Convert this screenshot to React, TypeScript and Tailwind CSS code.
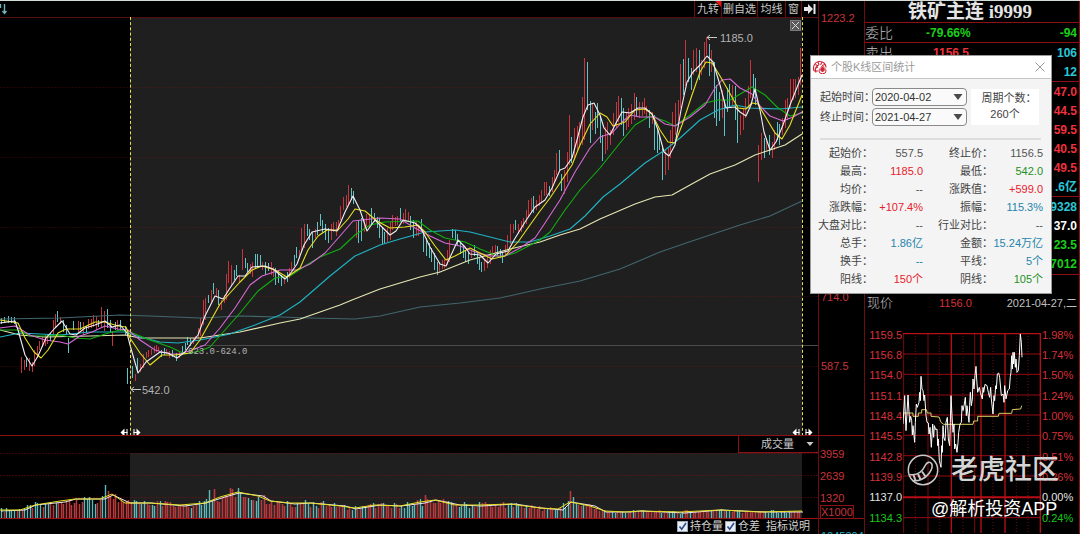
import {ReactElement, useState} from 'react';

type Point = [number, number];
type Candle = [number, number, number];

// [x, high, low]
const RISES:Candle[] = [
  [21,357,373],[24,360,370],[29,358,371],[32,362,372],[34,350,366],[37,346,358],[39,341,350],[42,337,347],[45,335,346],[47,334,344],
  [53,320,335],[55,314,328],[60,317,324],[78,321,332],[83,322,335],[88,319,329],[91,319,328],[93,315,327],[96,316,330],[101,307,327],[104,311,331],
  [112,331,346],[117,320,331],[135,374,381],[140,364,372],[143,354,368],[146,352,358],[148,350,357],[151,349,355],[154,346,353],
  [156,345,352],[158,347,351],[166,349,354],[169,351,358],[179,352,358],[193,338,344],[195,336,341],[198,328,338],[200,318,336],[203,300,325],
  [205,298,320],[211,290,302],[216,288,297],[221,300,310],[224,295,303],[226,274,300],[228,261,283],[231,265,285],[239,275,283],
  [242,249,270],[250,264,274],[252,262,277],[262,262,270],[271,262,275],[273,267,277],[284,276,284],[289,268,278],[291,262,270],
  [299,250,259],[301,228,252],[304,224,248],[315,229,238],[331,224,240],[333,222,232],[336,222,236],[338,220,230],[340,206,220],
  [343,197,210],[346,195,207],[348,185,205],[356,222,238],[364,219,232],[366,214,226],[369,215,228],[387,228,242],[390,222,240],
  [392,215,230],[395,217,226],[397,216,225],[403,213,224],[405,209,222],[408,212,221],[416,222,236],[418,225,236],[439,262,273],
  [442,260,269],[444,258,268],[447,250,265],[449,240,262],[471,250,258],[484,260,271],[487,257,268],[490,250,264],[492,246,256],
  [495,245,253],[505,245,256],[507,235,250],[510,224,244],[513,224,233],[518,224,234],[521,221,232],[523,218,228],[526,210,224],
  [528,200,217],[531,198,212],[536,200,210],[539,195,206],[541,190,202],[544,182,196],[546,182,195],[552,177,192],[554,170,183],
  [556,153,175],[564,170,194],[567,152,182],[569,115,165],[574,128,160],[577,126,150],[579,122,148],[582,97,145],[584,58,140],
  [592,103,130],[605,127,154],[607,122,150],[610,130,145],[613,113,135],[616,102,128],[618,96,122],[626,112,130],[628,108,127],
  [631,104,124],[634,93,120],[639,102,118],[642,102,116],[644,98,114],[646,106,117],[652,112,124],[665,150,175],[668,148,170],
  [670,130,158],[672,112,145],[675,103,135],[678,100,125],[680,64,108],[685,40,86],[693,50,75],[696,48,72],[701,60,75],
  [704,42,68],[706,37,55],[711,50,72],[722,90,118],[732,85,105],[740,115,135],[743,108,130],[745,98,118],[748,86,108],
  [750,60,98],[758,145,182],[761,133,160],[766,140,150],[772,142,158],[774,130,150],[782,118,135],[785,100,128],[787,98,120],
  [790,79,108],[793,79,100],[795,79,98],[798,77,95],[800,48,85],
];

const FALLS:Candle[] = [
  [1,318,324],[4,317,323],[8,316,323],[11,317,323],[14,317,324],[26,357,367],[50,333,341],[57,311,322],[63,320,332],[66,325,335],[68,338,353],[73,321,330],[80,322,330],
  [86,326,333],[98,320,327],[107,309,328],[110,320,332],[115,322,330],[120,320,331],[125,326,335],[127,368,384],[132,366,378],[137,358,371],[161,350,357],[164,348,355],
  [172,350,357],[176,353,361],[182,346,355],[185,343,350],[187,337,345],[190,338,346],[208,295,303],[213,283,294],[218,290,305],[234,270,280],[236,265,276],
  [245,258,268],[247,263,272],[255,254,268],[257,254,266],[260,255,267],[265,262,275],[268,263,271],[275,268,285],[278,270,283],
  [281,275,286],[287,272,282],[294,255,266],[296,247,258],[307,224,236],[309,229,240],[312,232,248],[317,222,235],[320,214,226],
  [322,220,233],[325,224,240],[328,228,243],[351,188,200],[353,191,204],[358,220,243],[361,218,241],[371,208,225],[374,213,222],
  [377,217,228],[379,218,238],[382,228,244],[384,232,243],[400,208,222],[410,216,230],[413,220,238],[421,219,232],[423,230,252],
  [426,238,256],[429,243,258],[431,248,262],[434,253,270],[437,262,275],[452,229,238],[455,230,240],[457,234,246],[460,241,254],
  [463,245,258],[465,250,262],[468,252,264],[474,245,256],[477,252,264],[479,258,270],[481,262,272],[497,246,256],[500,249,258],
  [502,252,263],[515,220,230],[533,196,213],[549,186,196],[559,150,170],[561,174,191],[571,137,163],[587,62,110],[590,101,143],
  [595,112,134],[597,103,128],[600,116,143],[602,135,161],[621,98,125],[623,108,136],[636,97,117],[649,110,128],[654,115,150],
  [657,128,153],[659,135,150],[662,148,180],[683,59,95],[688,58,82],[691,68,90],[699,50,80],[709,44,76],[714,62,118],
  [716,85,126],[719,92,121],[724,100,136],[727,88,112],[729,84,108],[735,86,120],[737,108,143],[753,74,96],[755,78,105],
  [764,138,158],[769,135,155],[777,122,140],[779,124,145],
];

const AVERAGES:{color:string, points:string}[] = [
  {color:'#41666d', points:'0,319 60,318 120,315 150,316 200,318 240,316 280,317 310,318 355,319 380,316 420,307 460,303 500,298 540,289 580,281 620,269 660,252 695,240 740,225 770,216 802,201'},
  {color:'#e6e6b4', points:'0,330 20,335 45,337 90,336 125,335 140,338 200,338 240,332 280,323 300,319 320,312 340,305 352,300 380,289 420,277 440,272 470,260 510,249 540,242 560,235 580,229 600,219 635,204 655,197 672,195 690,185 710,174 735,165 755,155 785,145 802,134'},
  {color:'#1fb4c4', points:'0,337 20,333 60,335 90,332 125,332 140,337 160,342 178,343 200,340 230,334 255,325 280,315 300,302 330,276 355,256 380,245 400,239 425,232 455,230 470,232 490,237 510,242 530,242 550,236 570,229 585,216 603,197 620,184 645,163 665,150 680,138 700,120 718,110 735,105 750,108 780,109 802,107'},
  {color:'#10b010', points:'0,330 18,330 30,336 45,336 60,335 75,338 90,339 105,334 120,330 130,332 150,340 170,347 185,354 200,351 210,347 225,330 240,313 258,291 275,278 290,276 305,266 320,257 340,249 355,235 370,225 385,222 418,221 430,230 445,238 465,242 480,249 500,257 515,253 540,240 550,232 565,210 580,190 600,168 620,143 635,125 650,116 665,121 675,126 690,115 705,103 718,100 730,100 742,93 752,87 765,95 777,107 790,116 802,113'},
  {color:'#d66ad6', points:'0,328 15,326 30,335 45,340 60,342 68,344 80,336 92,332 105,326 118,329 128,330 140,340 155,350 170,354 180,354 192,350 205,345 220,328 235,308 250,285 262,276 280,270 297,270 310,264 325,253 340,236 353,221 380,218 400,219 415,228 430,236 445,243 460,246 475,252 490,256 505,256 520,248 535,238 545,223 560,200 575,172 590,148 600,137 612,133 622,122 630,115 640,117 655,117 665,124 675,126 690,117 705,105 715,88 722,80 730,79 740,88 752,94 760,106 770,116 783,121 793,117 802,112'},
  {color:'#e8e020', points:'0,320 18,323 25,338 34,352 41,358 48,350 58,333 66,329 80,329 95,322 105,322 118,326 126,327 130,338 140,353 150,365 162,355 175,355 190,353 200,340 210,322 220,304 230,293 240,282 252,270 262,266 275,270 287,277 300,268 308,250 318,236 327,230 338,230 348,219 355,209 365,211 377,221 390,228 405,227 418,225 425,232 435,246 446,260 455,256 470,248 480,253 492,259 505,256 518,242 530,225 540,211 550,198 560,183 572,165 580,145 590,124 600,113 607,117 613,126 625,122 635,110 645,109 652,114 660,130 668,142 675,143 682,125 692,95 700,72 706,62 712,63 720,76 728,90 738,108 746,109 752,103 758,104 765,116 775,133 782,139 790,125 798,105 802,95'},
  {color:'#f4eef4', points:'0,323 15,321 18,330 25,355 32,366 38,356 46,338 55,328 62,321 70,334 76,335 85,328 95,325 105,321 112,327 120,325 127,333 130,345 138,373 146,362 160,352 168,353 177,358 185,352 190,345 198,335 205,316 215,296 223,299 230,288 238,276 245,276 252,267 265,266 273,269 285,279 290,274 297,264 304,245 312,232 325,229 337,231 345,212 353,196 360,210 367,231 375,220 382,227 390,235 396,231 403,220 415,223 422,230 430,247 440,264 446,266 452,253 458,240 465,247 470,254 480,255 488,263 496,254 508,251 514,240 525,222 535,207 545,200 552,188 560,170 565,168 572,158 577,140 583,117 588,105 594,103 600,115 604,128 610,135 616,123 622,112 630,113 638,108 645,108 652,114 658,130 664,152 669,156 675,145 681,110 687,82 693,72 700,65 707,56 713,62 720,85 726,108 735,107 740,112 746,116 751,105 755,89 760,110 764,132 770,150 776,142 783,125 790,105 798,85 802,75'},
];

const VOLUME_LEVEL:Point[] = [
  [0,510],[20,510],[35,505],[60,501],[75,499],[100,499],[112,494],[125,503],[150,503],[180,505],[205,503],[220,497],[238,492],[258,496],
  [270,501],[290,503],[310,503],[340,506],[355,508],[375,505],[400,506],[420,502],[435,500],[455,505],[480,505],[510,504],[540,508],
  [558,509],[570,502],[590,506],[605,511],[625,512],[640,511],[680,512],[720,510],[760,512],[802,511],
];

const VOLUME_PEAKS:Record<number, number> = {40:485, 80:490, 82:489, 88:488, 161:499, 163:495, 219:491, 220:497};

const levelAt = function(x:number):number{
  const next = VOLUME_LEVEL.findIndex(function(point){return point[0] >= x;});
  if(next <= 0){return VOLUME_LEVEL[0][1];}
  const [x0,y0] = VOLUME_LEVEL[next-1];
  const [x1,y1] = VOLUME_LEVEL[next];
  return y0 + (y1-y0)*(x-x0)/(x1-x0);
};

const volumeBars = Array.from({length:308},function(_,index){
  const x = Math.round(index*2.6)+1;
  const noise = Math.abs(Math.sin(index*12.9898)*43758.5453)%1;
  const level = levelAt(Math.min(x,802));
  const top = VOLUME_PEAKS[index] || Math.round(level+(noise-0.45)*(518-level)*0.5);
  const rising = x < 35 ? noise > 0.6 : Math.sin(index*0.31)+Math.sin(index*1.7)+noise*1.4 > 0.4;
  return {x,top,rising};
});

const toPath = function(candles:Candle[]):string{
  return candles.map(function([x,high,low]){return `M${x+0.5} ${high}V${low}`;}).join('');
};

const barPath = function(rising:boolean):string{
  return volumeBars.filter(function(bar){return bar.rising === rising;}).map(function(bar){return `M${bar.x+0.5} ${bar.top}V518`;}).join('');
};

function RangeHandle(props:{x:number}) : ReactElement {
  const {x} = props;
  return <g fill="#fff" stroke="#fff">
    <path stroke="none" d={`M${x-10} 432.5l4-4v8zM${x+10} 432.5l-4-4v8z`}/>
    <path d={`M${x-7} 432.5h4M${x-3.5} 429v7M${x+7} 432.5h-4M${x+3.5} 429v7`}/>
  </g>;
}

function PriceChart() : ReactElement {
  return <svg className="block w-full h-[418px]" viewBox="0 17 818 418" preserveAspectRatio="none">
    <rect x="130" y="17" width="672" height="418" fill="#1f1f1f"/>
    <path d="M0 17.5H818" stroke="#5a0d0d"/>
    <path d="M0 87.5H818M0 157.5H818M0 227.5H818M0 296.5H818M0 366.5H818" stroke="#8c1414" strokeOpacity="0.25" strokeDasharray="2 1"/>
    <path d="M200 345.5H818" stroke="#4c4c4c"/>
    <path d={toPath(RISES)} stroke="#c9343c"/>
    <path d={toPath(FALLS)} stroke="#5fc4c6"/>
    <g fill="none" strokeWidth="1.1">
      {AVERAGES.map(function(line){
        return <polyline key={line.color} points={line.points} stroke={line.color} strokeLinejoin="round"/>;
      })}
    </g>
    <path d="M130.5 17V435M802.5 17V435" stroke="#e6e04a" strokeDasharray="3 2.2"/>
    <path d="M131 389.5H141M134 387l-3 2.5l3 2.5M707 37.5H717M710 35l-3 2.5l3 2.5" stroke="#c8c8c8" fill="none"/>
    <g fill="#b4b4b4" className="font-['Liberation_Sans',sans-serif] text-[11px]">
      <text x="142" y="394">542.0</text>
      <text x="720" y="42">1185.0</text>
    </g>
    <text x="188" y="354" fill="#b4b4b4" className="font-['Liberation_Mono',monospace] text-[9px]">623.0-624.0</text>
    <RangeHandle x={130.5}/>
    <RangeHandle x={802.5}/>
  </svg>;
}

function VolumeChart() : ReactElement {
  const level = VOLUME_LEVEL.map(function(point){return point.join(',');}).join(' ');
  const slow = VOLUME_LEVEL.map(function([x,y],index){return `${x+(index%2 ? 5 : 1)},${y+(index%3 === 0 ? 1 : 0)}`;}).join(' ');
  return <svg className="block w-full h-[66px]" viewBox="0 453 818 66" preserveAspectRatio="none">
    <rect x="130" y="453" width="672" height="65" fill="#1f1f1f"/>
    <path d="M0 453.5H818M0 475.5H818M0 497.5H818" stroke="#8c1414" strokeOpacity="0.4" strokeDasharray="2 1"/>
    <path d={barPath(true)} stroke="#b8383c" strokeWidth="1.6"/>
    <path d={barPath(false)} stroke="#5fb8ba" strokeWidth="1.4"/>
    <polyline points={slow} fill="none" stroke="#f0e8f0"/>
    <polyline points={level} fill="none" stroke="#e8e020"/>
    <path d="M0 518.5H818" stroke="#a01018"/>
  </svg>;
}

function IndicatorCheck(props:{label:string}) : ReactElement {
  const {label} = props;
  const [checked,setChecked] = useState(true);
  return <label className="flex items-center gap-x-0.5">
    <span className="grid w-[11px] h-[11px]">
      <input type="checkbox" checked={checked} onChange={function(){setChecked(!checked);}} className="col-start-1 row-start-1 appearance-none w-[11px] h-[11px] bg-[#e8eef4] border border-[#9aa8b8]"/>
      {checked && <svg className="col-start-1 row-start-1 pointer-events-none" viewBox="0 0 11 11"><path d="M2.5 5.5L4.7 8.2L9 2" fill="none" stroke="#2c4a8a" strokeWidth="1.6"/></svg>}
    </span>
    {label}
  </label>;
}

function ChartPanel() : ReactElement {
  return <section className="flex-1 min-w-0 relative">
    <header className="h-4 flex items-center justify-between text-[#c8c8c8]">
      <svg className="w-2 h-3" viewBox="0 0 8 12" fill="none" stroke="#6fb4bc"><path d="M0.5 1V5M4.5 1V10M2.5 8L4.5 10.5L6.5 8" strokeWidth="1.4"/></svg>
      <nav className="h-full flex border-l border-[#6e0c10] divide-x divide-[#6e0c10] leading-4">
        <button className="relative w-[27px]">九转<i className="absolute right-0 top-0 border-t-[6px] border-t-[#e01818] border-l-[6px] border-l-transparent"/></button>
        <button className="w-9">删自选</button>
        <button className="w-7">均线</button>
        <button className="w-4">窗</button>
        <button aria-label="收起" className="w-4 flex items-center justify-center">
          <svg className="w-3 h-3" viewBox="0 0 12 12" fill="#e8e8e8"><path d="M0 4H4V1L9 6L4 11V8H0zM9.5 1H11.5V11H9.5z"/></svg>
        </button>
      </nav>
    </header>
    <PriceChart/>
    <button aria-label="关闭区间" className="absolute right-[17px] top-[19px] w-[11px] h-[11px] bg-[#5a5a5a] border border-[#7a7a7a]">
      <svg viewBox="0 0 9 9" stroke="#e0e0e0" fill="none"><path d="M1 1L8 8M8 1L1 8"/></svg>
    </button>
    <div className="h-[18px] flex justify-end border-t border-[#8c1016]">
      <button className="w-20 h-[17px] pl-5 pr-1 flex items-center justify-between border-l border-b border-[#8c1016] text-[#c8c8c8]">
        <span className="pl-0.5">成交量</span>
        <svg className="w-2 h-2" viewBox="0 0 8 8" fill="#c8c8c8"><path d="M0.5 2H7.5L4 6z"/></svg>
      </button>
    </div>
    <VolumeChart/>
    <footer className="h-[15px] pr-2 flex items-center justify-end gap-x-0.5 text-[#d0d0d0]">
      <IndicatorCheck label="持仓量"/>
      <IndicatorCheck label="仓差"/>
      <button className="ml-1">指标说明</button>
    </footer>
  </section>;
}

function PriceAxis() : ReactElement {
  return <aside className="flex-shrink-0 w-[47px] border-x border-[#6e0c10] text-[#c8343a] leading-[14px]">
    <div className="h-[435px] pt-2.5 pl-0.5 border-b border-[#8c1016]">
      <div>1223.2</div>
      <div className="mt-[265px]">714.0</div>
      <div className="mt-[55px]">587.5</div>
    </div>
    <div className="pt-[11px] pl-px h-[83px] border-b border-[#8c1016]">
      <div>3959</div>
      <div className="mt-2">2639</div>
      <div className="mt-2">1320</div>
      <div className="inline-block border border-[#8c1016] leading-3">X1000</div>
    </div>
    <div className="h-[15px] pt-2.5 pl-0.5 overflow-hidden text-[#1fb4c4]">1045304</div>
  </aside>;
}

const QUOTE_GROUPS:{text:string, color:string}[][] = [
  [
    {text:'47.0', color:'text-[#f0303c]'},
    {text:'44.5', color:'text-[#f0303c]'},
    {text:'59.5', color:'text-[#f0303c]'},
    {text:'40.5', color:'text-[#f0303c]'},
    {text:'49.5', color:'text-[#f0303c]'},
    {text:'.6亿', color:'text-[#28c8d8]'},
  ],
  [
    {text:'9328', color:'text-[#28c8d8]'},
    {text:'37.0', color:'text-white'},
    {text:'23.5', color:'text-[#18d018]'},
    {text:'7012', color:'text-[#18d018]'},
  ],
];

const TICKS:[string, string, string][] = [
  ['1159.5','1.98%','text-[#d83038]'],
  ['1156.8','1.74%','text-[#d83038]'],
  ['1154.0','1.50%','text-[#d83038]'],
  ['1151.1','1.24%','text-[#d83038]'],
  ['1148.4','1.00%','text-[#d83038]'],
  ['1145.5','0.75%','text-[#d83038]'],
  ['1142.8','0.51%','text-[#d83038]'],
  ['1139.9','0.26%','text-[#d83038]'],
  ['1137.0','0.00%','text-[#e4e4e4]'],
  ['1134.3','0.24%','text-[#18c818]'],
];

// drawn at three units to the pixel
function MinuteChart() : ReactElement {
  return <svg className="block w-full h-[200px]" viewBox="128 132 414 600" preserveAspectRatio="none" fill="none">
    <path d="M128 195H541M128 256H541M128 318H541M128 378H541M128 439H541M128 500H541M128 561H541M128 686H541" stroke="#960c12" strokeWidth="3"/>
    <path d="M203 132V732M343 132V732M130 132V732" stroke="#7c0a10" strokeWidth="3"/>
    <path d="M165 132V732M237 132V732M308 132V732M398 132V732M468 132V732M503 132V732" stroke="#6c0a0e" strokeWidth="3" strokeDasharray="3 6"/>
    <path d="M273 132V732M362 132V732M434 132V732M540 132V732M128 134H541" stroke="#b80e16" strokeWidth="4"/>
    <path d="M128 625H541" stroke="#b80e16" strokeWidth="6"/>
    <polyline stroke="#d8cc60" strokeWidth="3" points="130,372 158,372 158,382 174,382 174,372 184,372 184,362 198,362 201,372 212,372 212,382 236,384 242,400 250,406 338,406 340,396 352,396 352,382 414,382 416,373 454,373 456,362 481,360 484,350"/>
    <polyline stroke="#fff" strokeWidth="3" strokeLinejoin="round" points="128,405 133,320 135,380 137,425 143,318 146,370 148,400 151,382 154,395 156,438 158,410 161,440 163,460 165,400 168,345 171,355 176,340 178,310 180,335 182,262 185,300 188,305 191,335 193,318 197,380 200,400 204,402 206,435 209,415 213,475 217,405 220,445 222,410 226,422 230,420 232,470 234,450 237,515 242,535 244,470 246,490 248,410 250,445 254,455 257,400 261,385 264,450 268,470 270,400 272,320 275,380 278,430 281,405 283,480 286,465 290,490 293,460 295,430 299,405 303,400 305,350 308,365 312,345 315,325 318,380 320,350 326,400 328,350 330,310 333,350 336,330 338,270 341,300 344,260 347,232 349,270 352,310 357,295 360,310 366,330 368,295 370,310 374,286 380,290 384,310 388,325 391,295 393,330 398,375 401,320 403,335 406,290 408,300 411,255 415,252 418,265 423,320 428,315 431,340 433,290 437,330 442,305 447,300 450,262 452,250 454,200 456,240 458,190 460,225 462,190 465,235 467,210 470,250 474,245 477,200 480,135 483,160 485,205"/>
  </svg>;
}

function QuotePanel() : ReactElement {
  return <section className="flex-shrink-0 w-[215px] h-[533px] overflow-hidden border-r border-[#8c1016]">
    <h1 className="h-[21px] pr-1 leading-[21px] text-center text-[19px] font-bold text-[#e4e4e4] font-['Liberation_Serif','Noto_Sans_CJK_SC',serif]">铁矿主连 i9999</h1>
    <div className="h-5 flex items-center pr-0.5 border-t border-[#8c1016] text-xs font-bold text-[#18d018]">
      <span className="w-[61px] text-sm font-light text-[#c0c0c0]">委比</span>
      <span className="flex-1">-79.66%</span>
      <span>-94</span>
    </div>
    <div className="border-t border-[#8c1016] text-xs font-bold text-[#28c8d8]">
      <div className="h-[19px] flex items-center pr-0.5">
        <span className="w-[68px] text-sm leading-4 font-light text-[#c0c0c0]">卖出</span>
        <span className="flex-1 text-[#f0303c]">1156.5</span>
        <span>106</span>
      </div>
      <div className="h-[19px] flex items-center justify-end pr-0.5">12</div>
    </div>
    {QUOTE_GROUPS.map(function(group,index){
      return <ul key={index} className="border-t border-[#8c1016] text-xs font-bold">
        {group.map(function(quote){
          return <li key={quote.text} className={'h-[19px] flex items-center justify-end pr-0.5 '+quote.color}>{quote.text}</li>;
        })}
      </ul>;
    })}
    <div className="mt-px h-5 border-t border-[#8c1016]"/>
    <div className="h-[18px] flex items-center pl-0.5 pr-0.5 text-[#c0c0c0]">
      <span className="w-[72px] text-[13px] leading-4 font-light">现价</span>
      <span className="flex-1 text-[#d83038]">1156.0</span>
      <time dateTime="2021-04-27">2021-04-27,二</time>
    </div>
    <div className="relative mt-[13px] flex">
      <ul className="w-[38px] h-[203px] flex flex-col">
        {TICKS.map(function([price,,color]){
          return <li key={price} className={'flex-1 flex items-center justify-end pr-px '+color}>{price}</li>;
        })}
      </ul>
      <div className="flex-1 pt-2"><MinuteChart/></div>
      <ul className="w-[38px] h-[203px] flex flex-col">
        {TICKS.map(function([,percent,color]){
          return <li key={percent+color} className={'flex-1 flex items-center pl-px '+color}>{percent}</li>;
        })}
      </ul>
      <div className="absolute left-[42px] top-[125px] flex items-center gap-x-3 text-[27px] leading-10 font-medium text-[#d4d4d4] whitespace-nowrap">
        <svg className="w-8 h-8" viewBox="0 0 32 32" fill="none" stroke="#c8c8c8">
          <circle cx="16" cy="16" r="14.7" strokeWidth="1.5"/>
          <path d="M2.5 20.5C9 21.500 15 18.500 18.500 11C20 8 23 7.500 24.500 9.500C26 12 24.500 16 22 19.500C18 25 11 27.500 5.500 26.500" strokeWidth="1.6"/>
          <path d="M6.500 21L8.500 26.500M11 20L13.500 25.500M15 17.500L18.500 22.500" strokeWidth="2"/>
        </svg>
        老虎社区
      </div>
      <div className="absolute left-[66px] top-[170px] text-lg leading-7 text-white whitespace-nowrap">@解析投资APP</div>
    </div>
  </section>;
}

type Stat = [string, string, string];

const STATS:[Stat, Stat][] = [
  [['起始价','557.5','text-[#555]'],['终止价','1156.5','text-[#555]']],
  [['最高','1185.0','text-[#e8202c]'],['最低','542.0','text-[#1c901c]']],
  [['均价','--','text-[#555]'],['涨跌值','+599.0','text-[#e8202c]']],
  [['涨跌幅','+107.4%','text-[#e8202c]'],['振幅','115.3%','text-[#2484ac]']],
  [['大盘对比','--','text-[#555]'],['行业对比','--','text-[#555]']],
  [['总手','1.86亿','text-[#2484ac]'],['金额','15.24万亿','text-[#2484ac]']],
  [['换手','--','text-[#2484ac]'],['平线','5个','text-[#2484ac]']],
  [['阳线','150个','text-[#e8202c]'],['阴线','105个','text-[#1c901c]']],
];

function DateSelect(props:{id:string, label:string, value:string}) : ReactElement {
  const {id,label,value} = props;
  return <div className="flex items-center">
    <label htmlFor={id} className="flex-shrink-0 w-[52px] leading-4 whitespace-nowrap">{label}：</label>
    <div className="relative">
      <select id={id} defaultValue={value} className="block appearance-none w-[95px] h-[18px] pl-0.5 bg-[#fafafa] border border-[#8a8a8a] rounded-sm text-[#333]">
        <option>{value}</option>
      </select>
      <svg className="absolute right-1 top-1.5 w-2.5 h-1.5 pointer-events-none" viewBox="0 0 10 6" fill="#4a4a4a"><path d="M0.5 0H9.500L5 6z"/></svg>
    </div>
  </div>;
}

function RangeDialog() : ReactElement {
  return <div role="dialog" aria-labelledby="range-title" className="absolute right-7 top-[54px] w-[242px] pb-[5px] bg-[#f4f4f4] border border-[#9a9a9a] text-[#444]">
    <header className="h-[23px] flex items-center px-0.5 bg-white border-b border-[#c4c4c4]">
      <svg className="w-3.5 h-3.5" viewBox="0 0 14 14" fill="none" stroke="#d02434">
        <path d="M1 11C-0.500 6 2 2 6 1.500C10 1 13 4 13 7.500M3 12.500C1.500 9 3 5.500 6 5M2 8.500L5 7M2.500 4.500L5 6M5 2L6 5M9 2L7.500 5M12 4.500L9 5.500M1 11H5" strokeWidth="1.1"/>
        <path d="M9.500 5.500C11 8 13 9 13 11A3.200 2.500 0 0 1 6 11C6 9 8 8 9.500 5.500z" fill="#fff"/>
        <path d="M9.500 7L11.500 10L9.500 12L7.500 10z" fill="#d02434"/>
      </svg>
      <h2 id="range-title" className="flex-1 pl-1 text-[#9a9a9a]">个股K线区间统计</h2>
      <button aria-label="关闭" className="mr-1"><svg className="w-2.5 h-2.5" viewBox="0 0 10 10" stroke="#999" fill="none"><path d="M0.500 0.500L9.500 9.500M9.500 0.500L0.500 9.500"/></svg></button>
    </header>
    <div className="pl-[9px] pr-2 pt-[9px]">
      <div className="flex items-center gap-x-1 pb-3 mr-0.5 border-b-2 border-[#dedede]">
        <div className="flex flex-col gap-y-0.5">
          <DateSelect id="range-from" label="起始时间" value="2020-04-02"/>
          <DateSelect id="range-to" label="终止时间" value="2021-04-27"/>
        </div>
        <div className="w-[68px] h-9 bg-white text-center leading-4 pt-px">
          <div className="pl-2 whitespace-nowrap">周期个数：</div>
          <div>260个</div>
        </div>
      </div>
    </div>
    <table className="w-full mt-1 table-fixed text-right leading-4">
      <tbody>
        {STATS.map(function(row){
          return <tr key={row[0][0]} className="h-[18px]">
            {row.map(function([label,value,color]){
              return [
                <th key={label} scope="row" className="w-[62px] p-0 font-normal whitespace-nowrap">{label}：</th>,
                <td key={label+value} className={'p-0 pr-2 whitespace-nowrap '+color}>{value}</td>,
              ];
            })}
          </tr>;
        })}
      </tbody>
    </table>
  </div>;
}

export default function App() : ReactElement {
  return <main className="relative min-h-screen bg-black border-t border-[#d4dcd8] overflow-hidden text-[11px] font-['Liberation_Sans','Noto_Sans_CJK_SC',sans-serif]">
    <div className="flex">
      <ChartPanel/>
      <PriceAxis/>
      <QuotePanel/>
    </div>
    <RangeDialog/>
  </main>;
}
